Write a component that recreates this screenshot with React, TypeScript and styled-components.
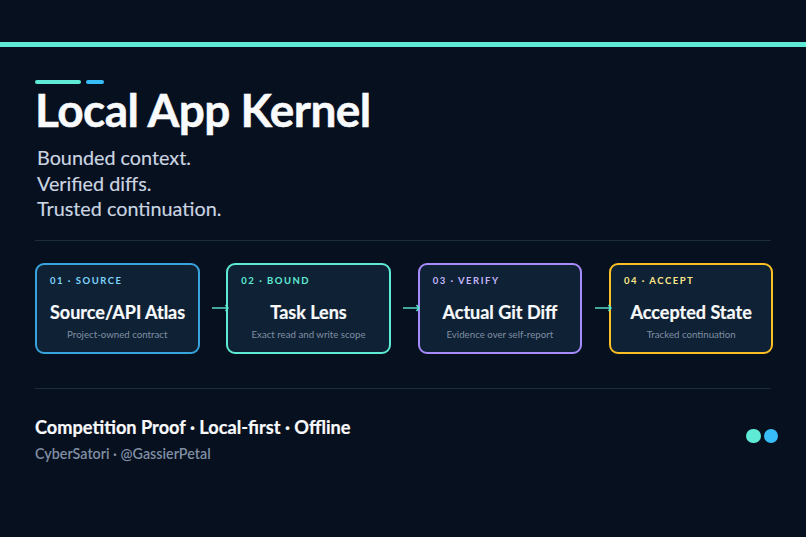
import React from "react";
import styled, { createGlobalStyle } from "styled-components";

const Global = createGlobalStyle`
  html, body { margin: 0; padding: 0; background: #07101f; }
  body { font-family: "Lato", "Open Sans", "Liberation Sans", sans-serif; }
`;

const Page = styled.div`
  width: 806px;
  height: 537px;
  background: #07101f;
  padding-top: 42px;
  box-sizing: border-box;
  overflow: hidden;
`;

const TopBar = styled.div`
  height: 5px;
  background: #5eead4;
`;

const Content = styled.div`
  padding: 33px 35px 0 35px;
  display: flex;
  flex-direction: column;
`;

const Accents = styled.div`
  display: flex;
  gap: 5px;
`;

const Accent = styled.div<{ $w: number; $c: string }>`
  width: ${(p) => p.$w}px;
  height: 4px;
  border-radius: 2px;
  background: ${(p) => p.$c};
`;

const Title = styled.h1`
  margin: -2px 0 0;
  font-size: 46px;
  line-height: 56px;
  font-weight: 700;
  letter-spacing: -0.55px;
  -webkit-text-stroke: 0.5px #f8fafc;
  color: #f8fafc;
`;

const Subtitle = styled.p`
  margin: 7px 0 0 2px;
  font-size: 19.8px;
  line-height: 25.5px;
  -webkit-text-stroke: 0.15px #cbd5e1;
  color: #cbd5e1;
`;

const Rule = styled.div`
  height: 1px;
  background: #1c2e3a;
`;

const TopRule = styled(Rule)`
  margin-top: 18px;
`;

const Flow = styled.div`
  margin: 22px -2.5px 0 0;
  display: flex;
  align-items: stretch;
  justify-content: space-between;
`;

const Card = styled.div<{ $border: string }>`
  width: 164.5px;
  height: 91px;
  box-sizing: border-box;
  flex: none;
  border: 2px solid ${(p) => p.$border};
  border-radius: 9px;
  background: #0f2235;
  padding: 9px 13px 0;
  display: flex;
  flex-direction: column;
`;

const Tag = styled.div<{ $c: string }>`
  font-size: 9.5px;
  line-height: 13px;
  font-weight: 700;
  letter-spacing: 1.5px;
  color: ${(p) => p.$c};
`;

const CardTitle = styled.div`
  margin-top: 13px;
  font-size: 18px;
  line-height: 24px;
  font-weight: 700;
  -webkit-text-stroke: 0.2px #f8fafc;
  color: #f8fafc;
  text-align: center;
  white-space: nowrap;
`;

const CardNote = styled.div`
  margin-top: 3px;
  font-size: 9.7px;
  line-height: 14px;
  color: #7f8ea3;
  text-align: center;
  white-space: nowrap;
`;

const Connector = styled.div`
  flex: none;
  width: 26px;
  display: flex;
  align-items: center;
  justify-content: flex-end;
  position: relative;
  z-index: 1;
`;

const ArrowSvg = styled.svg`
  overflow: visible;
  flex: none;
  margin-right: -3px;
`;

const BottomRule = styled(Rule)`
  margin-top: 34px;
`;

const Footer = styled.div`
  margin-top: 26px;
  display: flex;
  align-items: flex-start;
  justify-content: space-between;
  margin-right: -7px;
`;

const FooterText = styled.div`
  display: flex;
  flex-direction: column;
  gap: 5px;
`;

const FooterMain = styled.div`
  font-size: 18.2px;
  line-height: 24px;
  font-weight: 700;
  -webkit-text-stroke: 0.2px #f8fafc;
  color: #f8fafc;
`;

const FooterSub = styled.div`
  font-size: 14.3px;
  line-height: 19px;
  font-weight: 600;
  color: #7f8ea3;
`;

const Dots = styled.div`
  display: flex;
  gap: 3px;
  margin-top: 14px;
`;

const Dot = styled.div<{ $c: string }>`
  width: 14.5px;
  height: 14.5px;
  border-radius: 50%;
  background: ${(p) => p.$c};
`;

const steps = [
  { tag: "01 · SOURCE", title: "Source/API Atlas", note: "Project-owned contract", border: "#38a3dc", tagColor: "#7dd3fc" },
  { tag: "02 · BOUND", title: "Task Lens", note: "Exact read and write scope", border: "#5eead4", tagColor: "#5eead4" },
  { tag: "03 · VERIFY", title: "Actual Git Diff", note: "Evidence over self-report", border: "#a78bfa", tagColor: "#c4b5fd" },
  { tag: "04 · ACCEPT", title: "Accepted State", note: "Tracked continuation", border: "#fbbf24", tagColor: "#fde68a" },
];

const Arrow = () => (
  <ArrowSvg width="17" height="8" viewBox="0 0 17 8" fill="none" stroke="#5eead4" strokeWidth="1.4">
    <path d="M0 4H16" />
    <path d="M13.5 1L16 4L13.5 7" />
  </ArrowSvg>
);

export default function App() {
  return (
    <Page>
      <Global />
      <TopBar />
      <Content>
        <Accents>
          <Accent $w={46} $c="#5eead4" />
          <Accent $w={18} $c="#38bdf8" />
        </Accents>
        <Title>Local App Kernel</Title>
        <Subtitle>
          Bounded context.
          <br />
          Verified diffs.
          <br />
          Trusted continuation.
        </Subtitle>
        <TopRule />
        <Flow>
          {steps.map((s, i) => (
            <React.Fragment key={s.tag}>
              {i > 0 && (
                <Connector>
                  <Arrow />
                </Connector>
              )}
              <Card $border={s.border}>
                <Tag $c={s.tagColor}>{s.tag}</Tag>
                <CardTitle>{s.title}</CardTitle>
                <CardNote>{s.note}</CardNote>
              </Card>
            </React.Fragment>
          ))}
        </Flow>
        <BottomRule />
        <Footer>
          <FooterText>
            <FooterMain>Competition Proof · Local-first · Offline</FooterMain>
            <FooterSub>CyberSatori · @GassierPetal</FooterSub>
          </FooterText>
          <Dots>
            <Dot $c="#5eead4" />
            <Dot $c="#38bdf8" />
          </Dots>
        </Footer>
      </Content>
    </Page>
  );
}
